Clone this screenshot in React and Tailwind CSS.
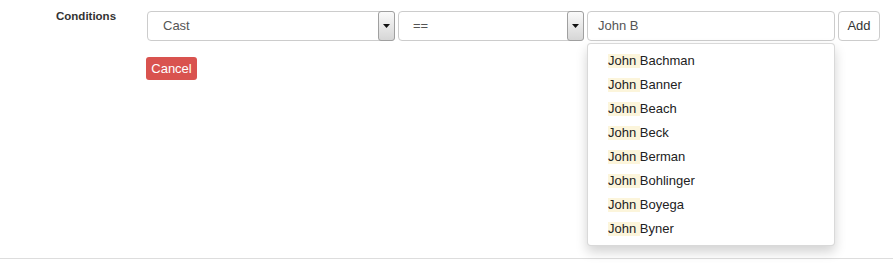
import React from "react";

const names = ["Bachman", "Banner", "Beach", "Beck", "Berman", "Bohlinger", "Boyega", "Byner"];

function Select({ width, label, padLeft }) {
  return (
    <div
      className={`relative flex h-[30px] items-center rounded-[4px] border border-[#cccccc] bg-white text-[13px] text-[#555555] ${width}`}
    >
      <span className={`flex-1 ${padLeft}`}>{label}</span>
      <div className="flex h-[30px] w-[17px] -mr-px -my-px items-center justify-center rounded-[3px] border border-[#a0a0a0] bg-gradient-to-b from-[#fafafa] to-[#d6d6d6]">
        <svg width="7" height="4" viewBox="0 0 7 4">
          <path d="M0 0 H7 L3.5 4 Z" fill="#111111" />
        </svg>
      </div>
    </div>
  );
}

export default function App() {
  return (
    <div className="flex h-[263px] w-[893px] flex-col bg-white font-['Liberation_Sans',Arial,sans-serif]">
      <div className="flex h-[258px] pt-[11px]">
        <div className="w-[147px] pl-[56px] text-[11.5px] font-bold leading-[9px] text-[#333333]">
          <span className="relative top-[1px]">Conditions</span>
        </div>
        <div className="flex flex-col">
          <div className="flex gap-[3px]">
            <Select width="w-[248px]" label="Cast" padLeft="pl-[15px]" />
            <Select width="w-[186px]" label="==" padLeft="pl-[14px]" />
            <div className="relative w-[248px]">
              <div className="flex h-[30px] items-center rounded-[4px] border border-[#cccccc] bg-white pl-[10px] text-[13px] text-[#555555]">
                John B
              </div>
              <ul className="absolute left-0 top-[32px] z-10 w-[248px] rounded-[4px] border border-[rgba(0,0,0,0.15)] bg-white pt-[5px] pb-[4px] shadow-[0_6px_12px_rgba(0,0,0,0.175)]">
                {names.map((n) => (
                  <li key={n} className="flex h-[24px] items-center pl-[20px] text-[13px] text-[#222222]">
                    <span className="bg-[#fcf5db] leading-[14px]">John&nbsp;</span>
                    <span>{n.charAt(0)}</span>
                    <span>{n.slice(1)}</span>
                  </li>
                ))}
              </ul>
            </div>
            <button className="flex h-[30px] w-[42px] items-center justify-center rounded-[4px] border border-[#cccccc] bg-white text-[13px] text-[#333333]">
              Add
            </button>
          </div>
          <div className="mt-[16px] -ml-px">
            <button className="flex h-[23px] w-[51px] items-center justify-center rounded-[3px] bg-[#d9534f] text-[13px] text-white">
              Cancel
            </button>
          </div>
        </div>
      </div>
      <div className="border-t border-[#dddddd]" />
      <div className="h-[4px]" />
    </div>
  );
}
